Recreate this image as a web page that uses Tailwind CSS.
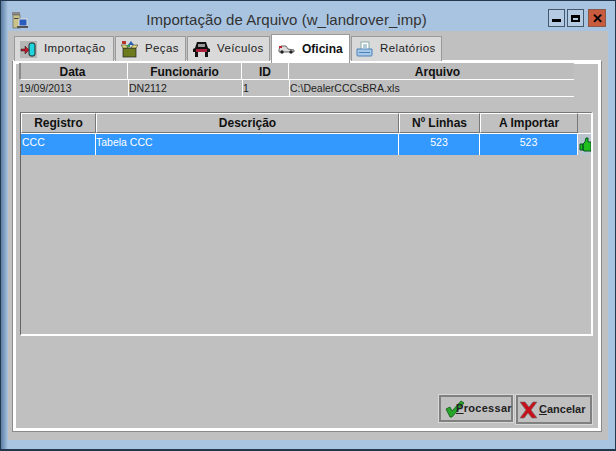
<!DOCTYPE html>
<html lang="pt-BR">
<head>
<meta charset="UTF-8">
<title>Importação de Arquivo</title>
<script src="https://cdn.jsdelivr.net/npm/@tailwindcss/browser@4"></script>
</head>
<body class="bg-[#1f3a56]">
<div class="w-[616px] h-[451px] overflow-hidden border border-[#23384f] border-b-2 bg-linear-to-r from-[#5d7fa5] from-[0px] to-[#a9c4e0] to-[7px] font-['Liberation_Sans',sans-serif] text-[#111]">
  <!-- barra de titulo -->
  <div class="h-[30px] flex items-center pl-[11px] pr-[9px]">
    <svg width="16" height="17" viewBox="0 0 16 17" class="shrink-0 mt-[8px]">
      <rect x="0" y="0" width="8" height="3" fill="#888"/>
      <rect x="1" y="3" width="7" height="13" fill="#c9c38a" stroke="#555" stroke-width="0.6"/>
      <rect x="2" y="6" width="5" height="1" fill="#444"/>
      <rect x="7" y="7" width="8" height="7" fill="#2a5cc0" stroke="#ddd"/>
      <rect x="5" y="14" width="11" height="2" fill="#555"/>
    </svg>
    <div class="flex-1 text-center text-[15px] tracking-[0.05px] text-[#333] ml-[-3px] mt-[9px]">Importação de Arquivo (w_landrover_imp)</div>
    <div class="flex gap-[2px] mt-[4px]">
      <div class="w-[17px] h-[18px] border border-[#44586e] bg-[#b4cbe3] flex items-center justify-center"><div class="w-[9px] h-[3px] bg-black mt-[5px]"></div></div>
      <div class="w-[17px] h-[18px] border border-[#44586e] bg-[#b4cbe3] flex items-center justify-center"><div class="w-[9px] h-[7px] border-2 border-t-[3px] border-black"></div></div>
      <div class="w-[18px] h-[18px] ml-[2px] border border-[#8a5a48] bg-[#c95b3e] flex items-center justify-center text-[13px] leading-none font-bold text-black">✕</div>
    </div>
  </div>

  <!-- area cinza -->
  <div class="w-[600px] h-[409px] ml-[7px] bg-[#c0c0c0] pt-[2px]">
    <!-- abas -->
    <div class="h-[27px] ml-[6px] flex items-end gap-[1px] text-[11.5px] tracking-[0.4px] text-[#222] relative z-10">
      <div class="w-[100px] h-[25px] mb-[-1px] bg-[#d9d9d9] border border-b-0 border-[#9a9a9a] flex items-center pl-[5px] gap-[7px]">
        <svg width="17" height="17" viewBox="0 0 17 17" class="shrink-0"><rect width="17" height="17" fill="#b5b5b5"/><rect x="9" y="2" width="6" height="13" rx="2" fill="#1fd4dc" stroke="#222"/><path d="M1 8h4V5l4 4-4 4v-3H1z" fill="#c01428" stroke="#222" stroke-width="0.5"/></svg>
        <span>Importação</span>
      </div>
      <div class="w-[71px] h-[25px] mb-[-1px] bg-[#d9d9d9] border border-b-0 border-[#9a9a9a] flex items-center pl-[5px] gap-[7px]">
        <svg width="17" height="17" viewBox="0 0 17 17" class="shrink-0"><rect x="2" y="7" width="13" height="9" fill="#6d7a1e" stroke="#222" stroke-width="0.7"/><path d="M2 7L0 4h5l2 3zM15 7l2-3h-5l-2 3z" fill="#e6dc7a" stroke="#333" stroke-width="0.6"/><rect x="1" y="0" width="4" height="3" fill="#b5342c"/><path d="M7 4l3-4 3 4z" fill="#2b5fb0"/><rect x="6" y="4" width="3" height="2" fill="#37a04a"/></svg>
        <span>Peças</span>
      </div>
      <div class="w-[83px] h-[25px] mb-[-1px] bg-[#d9d9d9] border border-b-0 border-[#9a9a9a] flex items-center pl-[5px] gap-[7px]">
        <svg width="17" height="17" viewBox="0 0 17 17" class="shrink-0"><path d="M4 1h9l2 6 2 1v3H0V8l2-1z" fill="#111"/><rect x="5" y="3" width="7" height="3" fill="#999"/><rect x="3" y="8" width="11" height="3" fill="#a8203a"/><rect x="2" y="11" width="3" height="5" fill="#111"/><rect x="12" y="11" width="3" height="5" fill="#111"/></svg>
        <span>Veículos</span>
      </div>
      <div class="w-[79px] h-[29px] mb-[-3px] bg-white border border-b-0 border-[#9a9a9a] flex items-center pl-[6px] gap-[6px] font-bold text-[#111] tracking-normal text-[12px]">
        <svg width="18" height="9" viewBox="0 0 18 9" class="shrink-0"><path d="M1 4l2-3h5l2 3 6 1v2H1z" fill="#ddd" stroke="#444" stroke-width="0.8"/><circle cx="4" cy="7" r="1.7" fill="#222"/><circle cx="13" cy="7" r="1.7" fill="#222"/><rect x="1" y="1" width="3" height="2" fill="#c02030"/></svg>
        <span>Oficina</span>
      </div>
      <div class="w-[91px] h-[25px] mb-[-1px] bg-[#d9d9d9] border border-b-0 border-[#9a9a9a] flex items-center pl-[4px] gap-[7px]">
        <svg width="17" height="16" viewBox="0 0 17 16" class="shrink-0"><rect x="5" y="1" width="8" height="8" fill="#fff" stroke="#8aa"/><path d="M7 4h4M7 6h4" stroke="#69a"/><path d="M1 8h15v6a1 1 0 0 1-1 1H2a1 1 0 0 1-1-1z" fill="#a8c8e8" stroke="#4c82b8"/><rect x="3" y="11" width="11" height="1" fill="#4c82b8"/></svg>
        <span>Relatórios</span>
      </div>
    </div>

    <!-- painel da aba -->
    <div class="relative w-[590px] h-[372px] ml-[4px] border border-[#8a8a8a] border-t-white">
      <div class="h-full border-[3px] border-white pl-[3px] flex flex-col">
        <!-- lista do arquivo -->
        <div class="w-[555px] mt-[-2px] border-t border-white text-[10px]">
          <div class="flex h-[17px] font-bold text-[12px] text-[#111] leading-[18px] text-center">
            <div class="w-[109px] pr-[3px] border-r border-b border-white border-l-2 border-l-[#8a8a8a] bg-[#bdbdbd]">Data</div>
            <div class="w-[114px] border-r border-b border-white bg-[#bdbdbd]">Funcionário</div>
            <div class="w-[47px] border-r border-b border-white bg-[#bdbdbd]">ID</div>
            <div class="flex-1 pl-[12px] border-b border-white bg-[#bdbdbd]">Arquivo</div>
          </div>
          <div class="flex h-[17px] border-b border-white leading-[17px] text-[#222] text-[10.5px]">
            <div class="w-[109px]">19/09/2013</div>
            <div class="w-[114px] border-l border-white">DN2112</div>
            <div class="w-[47px] border-l border-white">1</div>
            <div class="flex-1 border-l border-white">C:\DealerCCCsBRA.xls</div>
          </div>
        </div>

        <!-- grade de registros -->
        <div class="w-[573px] h-[224px] mt-[15px] ml-[1px] border-l border-t border-l-[#666] border-t-[#777] border-b-2 border-r-2 border-b-white border-r-white">
          <div class="flex h-[20px] font-bold text-[12px] leading-[18px] text-center text-[#111]">
            <div class="w-[75px] border border-[#777] border-l-white border-t-white">Registro</div>
            <div class="w-[303px] border border-[#777] border-l-white border-t-white">Descrição</div>
            <div class="w-[81px] border border-[#777] border-l-white border-t-white">Nº Linhas</div>
            <div class="w-[98px] border border-[#777] border-l-white border-t-white">A Importar</div>
            <div class="w-[13px] border-t border-white"></div>
          </div>
          <div class="flex h-[22px] bg-[#3399ff] text-white text-[10.5px] leading-[17px] border-t border-white">
            <div class="w-[75px] border-r border-white pl-[1px]">CCC</div>
            <div class="w-[303px] border-r border-white">Tabela CCC</div>
            <div class="w-[81px] border-r border-white text-center">523</div>
            <div class="w-[98px] border-r border-white text-center">523</div>
            <div class="w-[13px] bg-[#b9c4cf] flex items-center justify-center overflow-hidden">
              <svg width="12" height="15" viewBox="0 0 12 15"><path d="M1 7h3v6H1zM4 7l2-2 1-4h2v4h3v9H5l-1-1z" fill="#22c01e" stroke="#052" stroke-width="1"/></svg>
            </div>
          </div>
        </div>

        <!-- botoes -->
        <div class="flex justify-end items-start gap-[3px] mt-[59px] w-[573px] text-[11px] font-bold text-[#222]">
          <div class="w-[74px] h-[27px] border-2 border-[#808080] outline outline-1 outline-[#d8d8d8] flex items-center whitespace-nowrap">
            <svg width="20" height="18" viewBox="0 0 20 18" class="shrink-0 ml-[4px] mr-[-9px]"><path d="M1 9l4-2 2 4 9-10 3 2-12 14H5z" fill="#27a52a" stroke="#0a5a12" stroke-width="0.8"/></svg>
            <span class="tracking-[0.3px]"><span class="underline">P</span>rocessar</span>
          </div>
          <div class="w-[76px] h-[29px] border-2 border-[#808080] outline outline-1 outline-[#d8d8d8] flex items-center whitespace-nowrap">
            <svg width="19" height="18" viewBox="0 0 19 18" class="shrink-0 ml-[1px] mr-[1px]"><path d="M1 1h5l4 5 4-5h4l-6 8 6 8h-5l-4-5-4 5H1l6-8z" fill="#c8101c" stroke="#666" stroke-width="0.6"/></svg>
            <span><span class="underline">C</span>ancelar</span>
          </div>
        </div>
      </div>
    </div>
  </div>
</div>
</body>
</html>
